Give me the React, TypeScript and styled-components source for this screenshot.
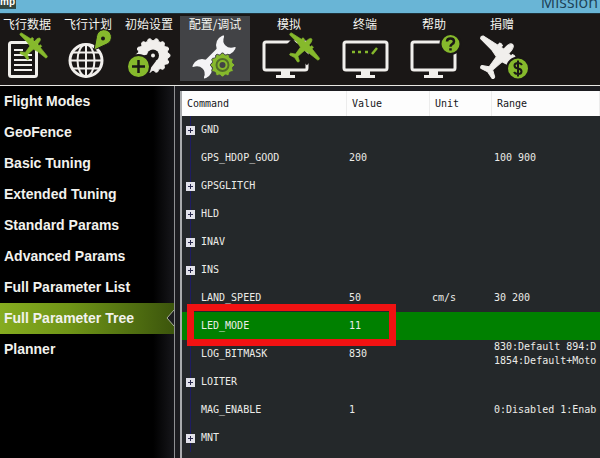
import React from 'react';
import styled, { createGlobalStyle, css } from 'styled-components';

const Global = createGlobalStyle`
  * { box-sizing: border-box; }
  html, body, #root { height: 100%; margin: 0; }
  body { overflow: hidden; background: #24282a; }
`;

const Window = styled.div`
  display: flex;
  flex-direction: column;
  height: 100vh;
  overflow: hidden;
  font-family: 'Liberation Sans', Arial, sans-serif;
`;

const TitleBar = styled.header`
  display: flex;
  flex: none;
  justify-content: space-between;
  align-items: flex-end;
  height: 13px;
  padding-right: 2px;
  overflow: hidden;
  background: #69b5d6;
`;

const AppBadge = styled.span`
  align-self: flex-start;
  width: 16px;
  height: 9px;
  background: #34453c;
  border-bottom: 1px solid #2b4a50;
  color: #fff;
  font-size: 10px;
  font-weight: bold;
  line-height: 4px;
`;

const Title = styled.h1`
  margin: 0;
  height: 21px;
  color: #1d4257;
  font: 16px/20px 'Open Sans', sans-serif;
`;

const Toolbar = styled.nav`
  display: flex;
  flex: none;
  gap: 4px;
  height: 73px;
  padding-top: 2px;
  background: #1a1716;
  border-top: 1px solid #1d3038;
  border-bottom: 1px solid #e8e8e4;
`;

const Tool = styled.button<{ $w: number; $active?: boolean }>`
  display: flex;
  flex: none;
  flex-direction: column;
  align-items: center;
  width: ${p => p.$w}px;
  height: 65px;
  padding: 0;
  border: 0;
  background: ${p => (p.$active ? '#424346' : 'transparent')};
  color: #f4f4f0;
  font: 12px/16px 'Noto Sans CJK SC', sans-serif;
  white-space: nowrap;
`;

const Art = styled.svg`
  display: block;
  flex: none;
  width: 54px;
  height: 48px;
  overflow: visible;
`;

const Main = styled.main`
  display: flex;
  flex: 1;
  min-height: 0;
  background: #1c1c20;
`;

const Sidebar = styled.nav`
  flex: none;
  width: 175px;
  background: linear-gradient(90deg, #000 88%, #17171b);
  border-right: 1px solid #8f9093;
`;

const SideLink = styled.a<{ $active?: boolean }>`
  display: flex;
  align-items: center;
  justify-content: space-between;
  height: 31px;
  padding: 0 0 2px 4px;
  color: #f2f2ee;
  font-size: 14px;
  font-weight: bold;
  text-decoration: none;
  white-space: nowrap;
  ${p => p.$active && css`
    background: linear-gradient(90deg, #86ac20, #6f9417 40%, #4d6b10 80%, #3c550c);
  `}
`;

const Notch = styled.svg`
  width: 8px;
  height: 16px;
`;

const Panel = styled.section`
  flex: 1;
  min-width: 0;
  margin: 5px 0 0 5px;
  overflow: hidden;
  background: #24282a;
  border-left: 2px solid #a9abad;
`;

const Grid = styled.table`
  width: 100%;
  table-layout: fixed;
  border-collapse: separate;
  border-spacing: 0;
  color: #ecece8;
  font: 10px/14px 'DejaVu Sans Mono', 'Liberation Mono', monospace;
`;

const Col = styled.col<{ $w?: number }>`
  width: ${p => (p.$w ? `${p.$w}px` : 'auto')};
`;

const Head = styled.th`
  height: 25px;
  padding: 0 5px;
  background: #fdfdfd;
  border-right: 1px solid #ececec;
  color: #16161a;
  font-weight: normal;
  text-align: left;
`;

const Row = styled.tr<{ $active?: boolean }>`
  background: ${p => (p.$active ? '#008000' : 'transparent')};
`;

const Cell = styled.td`
  height: 28px;
  padding: 0 2px;
  line-height: 14px;
  white-space: pre;
`;

const NameCell = styled.td`
  position: relative;
  padding: 0 0 0 4px;
`;

const Name = styled.div`
  display: flex;
  align-items: center;
  height: 28px;
`;

const Branch = styled.span<{ $hidden?: boolean }>`
  display: flex;
  align-items: center;
  flex: none;
  width: 9px;
  height: 28px;
  margin-right: 6px;
  background: ${p => (p.$hidden ? 'none' : 'linear-gradient(#1e1c62, #1e1c62) center / 1px 100% no-repeat')};
`;

const Expander = styled.button`
  display: flex;
  width: 9px;
  height: 9px;
  padding: 0;
  border: 0;
  background: #e2e2ea;
`;

const Marker = styled.div`
  position: absolute;
  z-index: 1;
  top: -8px;
  bottom: -6px;
  left: 5px;
  width: 209px;
  border: 7px solid #f11212;
  pointer-events: none;
`;

const WHITE = '#f1efec';
const GREEN = '#86b92c';
const DARK = '#1a1716';
const SLATE = '#424346';

const Plane = ({ x, y, size, fill }: { x: number; y: number; size: number; fill: string }) => (
  <path
    transform={`translate(${x} ${y}) rotate(42) scale(${size})`}
    fill={fill}
    stroke={fill}
    strokeLinejoin="round"
    d="M0-15C2-15 3.500-12 3.500-7L3.500-5L7-5V-7Q9-8 11-7V-4L29-1Q31 1 29 3L12 4L4 6L2.500 19L9 23Q10 25 8 26L0 24L-8 26Q-10 25-9 23L-2.500 19L-4 6L-12 4L-29 3Q-31 1-29-1L-11-4V-7Q-9-8-7-7V-5L-3.500-5L-3.500-7C-3.500-12-2-15 0-15Z"
  />
);

const Monitor = ({ x = 2 }: { x?: number }) => (
  <>
    <rect x={x} y="10" width="43" height="28" rx="2" fill="none" stroke={WHITE} strokeWidth="3" />
    <path d={`M${x + 17} 39h9v4h5v3h-19v-3h5z`} fill={WHITE} />
  </>
);

const gear = (cx: number, cy: number, outer: number, inner: number, teeth: number) => {
  const points: string[] = [];
  for (let i = 0; i < teeth * 4; i += 1) {
    const angle = ((i - 0.5) / (teeth * 4)) * Math.PI * 2;
    const r = i % 4 < 2 ? outer : inner;
    points.push(`${(cx + Math.cos(angle) * r).toFixed(2)} ${(cy + Math.sin(angle) * r).toFixed(2)}`);
  }
  return `M${points.join('L')}Z`;
};

const DataArt = () => (
  <Art>
    <rect x="9.500" y="10.500" width="27" height="34" rx="2" fill="none" stroke={WHITE} strokeWidth="3" />
    <path d="M14 18h9M14 23h18M14 28h18M14 33h18M14 38h18" stroke={WHITE} strokeWidth="2" />
    <Plane x={34} y={13} size={0.6} fill={GREEN} />
  </Art>
);

const PlanArt = () => (
  <Art>
    <g fill="none" stroke={WHITE} strokeWidth="2">
      <circle cx="25" cy="28.500" r="16" strokeWidth="3" />
      <ellipse cx="25" cy="28.500" rx="8.500" ry="16" />
      <path d="M25 12.500v32M9 28.500h32M12 20.500h26M12 36.500h26" />
    </g>
    <path d="M33 18L35.500 4.500A7.500 7.500 0 1 1 46 12Z" fill={GREEN} stroke={DARK} />
    <circle cx="42" cy="6.500" r="2" fill={DARK} />
  </Art>
);

const SetupArt = () => (
  <Art>
    <path d={gear(31, 23.5, 17, 15, 14)} fill={WHITE} stroke={WHITE} strokeLinejoin="round" />
    <circle cx="31" cy="23.500" r="6" fill={DARK} />
    <path d="M20 24l7-2 7 7-6 8z" fill={DARK} />
    <circle cx="31" cy="23.500" r="2" fill={WHITE} />
    <circle cx="16.500" cy="34.500" r="11.500" fill={GREEN} stroke={DARK} strokeWidth="2" />
    <path d="M16.500 28v13M10 34.500h13" stroke={DARK} strokeWidth="2.500" />
  </Art>
);

const ConfigArt = () => (
  <Art>
    <path d="M14 37L38 13" stroke="#f4f4f6" strokeWidth="8" />
    <circle cx="38" cy="13" r="10" fill="#f4f4f6" />
    <circle cx="14" cy="37" r="10" fill="#f4f4f6" />
    <path d="M36 1H54V15H47Q41 17 37.500 13.500T36 5Z" fill={SLATE} />
    <path d="M0 35H5Q11 33 14.500 36.500T16 45V48H0Z" fill={SLATE} />
    <path d={gear(34.5, 33, 12, 10.5, 12)} fill={GREEN} stroke={SLATE} />
    <circle cx="34.500" cy="33" r="6" fill="none" stroke="#526d29" strokeWidth="2" />
    <circle cx="34.500" cy="33" r="3" fill={SLATE} />
  </Art>
);

const SimulationArt = () => (
  <Art>
    <Monitor />
    <path d="M27 10L48 30" stroke={DARK} strokeWidth="9" />
    <Plane x={43} y={14} size={0.65} fill={GREEN} />
  </Art>
);

const TerminalArt = () => (
  <Art>
    <Monitor x={6} />
    <path d="M14 20h3M20 20h3M27 20h3M34 22l5-6" stroke={GREEN} strokeWidth="2.500" />
  </Art>
);

const HelpArt = () => (
  <Art>
    <Monitor x={5} />
    <circle cx="43.500" cy="12" r="10" fill={GREEN} stroke={DARK} strokeWidth="2" />
    <path d="M40 9.500Q40 6.500 43.500 6.500T47 9.500Q47 11 45 12.200Q43.500 13.200 43.500 14.800M43.500 16.200V18.500" fill="none" stroke={DARK} strokeWidth="2.500" />
  </Art>
);

const DonateArt = () => (
  <Art>
    <Plane x={28} y={23} size={0.95} fill={WHITE} />
    <circle cx="43" cy="36.500" r="11" fill={GREEN} stroke={DARK} strokeWidth="2" />
    <path d="M47 33Q46 31 43 31Q39.500 31 39.500 33.500T43 36.500T46.500 39.500T43 42Q40 42 39 40M43 28.500V44.500" fill="none" stroke={DARK} strokeWidth="2" />
  </Art>
);

const tools = [
  { label: '飞行数据', width: 54, art: DataArt },
  { label: '飞行计划', width: 60, art: PlanArt },
  { label: '初始设置', width: 54, art: SetupArt },
  { label: '配置/调试', width: 70, art: ConfigArt },
  { label: '模拟', width: 70, art: SimulationArt },
  { label: '终端', width: 74, art: TerminalArt },
  { label: '帮助', width: 56, art: HelpArt },
  { label: '捐赠', width: 72, art: DonateArt },
];

const pages = [
  'Flight Modes', 'GeoFence', 'Basic Tuning', 'Extended Tuning', 'Standard Params',
  'Advanced Params', 'Full Parameter List', 'Full Parameter Tree', 'Planner',
];

type Param = { name: string; group?: boolean; value?: string; unit?: string; range?: string };

const params: Param[] = [
  { name: 'GND', group: true },
  { name: 'GPS_HDOP_GOOD', value: '200', range: '100 900' },
  { name: 'GPSGLITCH', group: true },
  { name: 'HLD', group: true },
  { name: 'INAV', group: true },
  { name: 'INS', group: true },
  { name: 'LAND_SPEED', value: '50', unit: 'cm/s', range: '30 200' },
  { name: 'LED_MODE', value: '11' },
  { name: 'LOG_BITMASK', value: '830', range: '830:Default 894:D\n1854:Default+Moto' },
  { name: 'LOITER', group: true },
  { name: 'MAG_ENABLE', value: '1', range: '0:Disabled 1:Enab' },
  { name: 'MNT', group: true },
];

export default function App() {
  const selected = 'LED_MODE';
  return (
    <Window>
      <Global />
      <TitleBar>
        <AppBadge>mp</AppBadge>
        <Title>Mission</Title>
      </TitleBar>
      <Toolbar>
        {tools.map(({ label, width, art: Icon }) => (
          <Tool key={label} type="button" $w={width} $active={label === '配置/调试'}>
            {label}
            <Icon />
          </Tool>
        ))}
      </Toolbar>
      <Main>
        <Sidebar>
          {pages.map(page => {
            const active = page === 'Full Parameter Tree';
            return (
              <SideLink key={page} href="#" $active={active}>
                {page}
                {active && (
                  <Notch viewBox="0 0 8 16">
                    <path d="M8 0L1 8L8 16Z" fill="#1c1c20" />
                    <path d="M8 0L1 8L8 16" fill="none" stroke="#a9b09a" />
                  </Notch>
                )}
              </SideLink>
            );
          })}
        </Sidebar>
        <Panel>
          <Grid>
            <colgroup>
              <Col $w={165} />
              <Col $w={83} />
              <Col $w={62} />
              <Col />
            </colgroup>
            <thead>
              <tr>
                <Head>Command</Head>
                <Head>Value</Head>
                <Head>Unit</Head>
                <Head>Range</Head>
              </tr>
            </thead>
            <tbody>
              {params.map(param => (
                <Row key={param.name} $active={param.name === selected}>
                  <NameCell>
                    <Name>
                      <Branch $hidden={param.name === selected}>
                        {param.group && (
                          <Expander type="button" aria-label={`Expand ${param.name}`}>
                            <svg width="9" height="9" viewBox="0 0 9 9">
                              <path d="M2 4.500h5M4.500 2v5" stroke="#2b2b50" />
                            </svg>
                          </Expander>
                        )}
                      </Branch>
                      {param.name}
                    </Name>
                    {param.name === selected && <Marker />}
                  </NameCell>
                  <Cell>{param.value}</Cell>
                  <Cell>{param.unit}</Cell>
                  <Cell>{param.range}</Cell>
                </Row>
              ))}
            </tbody>
          </Grid>
        </Panel>
      </Main>
    </Window>
  );
}
